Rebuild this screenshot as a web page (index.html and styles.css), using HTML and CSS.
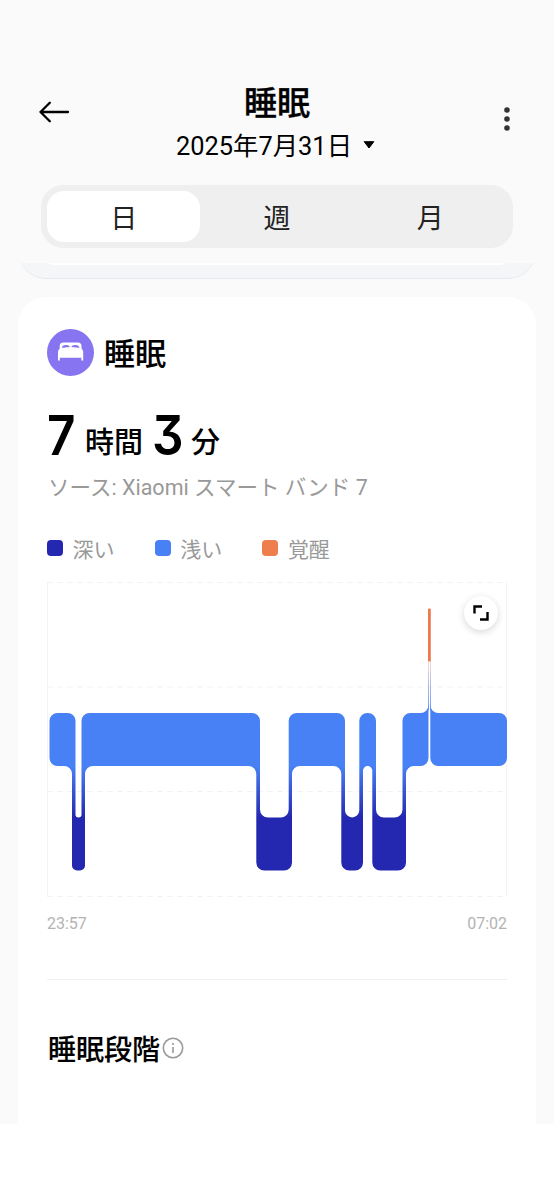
FILE: index.html
```html
<!DOCTYPE html>
<html lang="ja">
<head>
    <meta charset="UTF-8">
    <meta name="viewport" content="width=device-width, initial-scale=1.0">
    <title>睡眠</title>
    <link rel="stylesheet" href="styles.css">
</head>
<body>
    <div class="screen">
        <header class="header">
            <svg class="back" width="32" height="24" viewBox="0 0 32 24">
                <path d="M2.500 12H30M11.800 2.800L2.500 12L11.800 21.200" fill="none" stroke="#000" stroke-width="2.3" stroke-linecap="round" stroke-linejoin="round"/>
            </svg>
            <div class="heading">
                <h1>睡眠</h1>
                <div class="date">
                    <span>2025年7月31日</span>
                    <svg width="12" height="8" viewBox="0 0 12 8"><path d="M1.2.7H10.8L6 7Z" stroke="#000" stroke-width="1" stroke-linejoin="round"/></svg>
                </div>
            </div>
            <svg class="more" width="8" height="26" viewBox="0 0 8 26" fill="#333">
                <circle cx="4" cy="4" r="2.8"/>
                <circle cx="4" cy="13" r="2.8"/>
                <circle cx="4" cy="22" r="2.8"/>
            </svg>
        </header>

        <nav class="tabs">
            <div class="tab active">日</div>
            <div class="tab">週</div>
            <div class="tab">月</div>
        </nav>

        <!-- Bottom edge of the card scrolled under the header -->
        <div class="scrolled">
            <div class="prev-card"><div class="prev-inner"></div></div>
        </div>

        <main class="card">
            <div class="card-title">
                <svg width="47" height="47" viewBox="0 0 47 47">
                    <circle cx="23.5" cy="23.5" r="23.5" fill="#8674f0"/>
                    <path d="M12.700 20V17.300Q12.700 13.600 16.500 13.600H30.700Q34.500 13.600 34.500 17.300V20Z" fill="#fff"/>
                    <path d="M14.800 19.300Q15 16 18.800 16Q22.600 16 22.800 18.300ZM24.400 18.300Q24.600 16 28.400 16Q32.200 16 32.400 19.300Z" fill="#8674f0"/>
                    <path d="M11 31.500V23.500Q11 19.300 15.500 18.800Q23.600 17.800 31.700 18.800Q36.200 19.300 36.200 23.500V31.500H34.400V28.800H12.800V31.500Z" fill="#fff"/>
                </svg>
                <h2>睡眠</h2>
            </div>

            <div class="duration">
                <span class="num">7</span>
                <span class="unit hours">時間</span>
                <span class="num">3</span>
                <span class="unit">分</span>
            </div>
            <p class="source">ソース: Xiaomi スマート バンド 7</p>

            <div class="legend">
                <div class="item"><i class="dot deep"></i>深い</div>
                <div class="item"><i class="dot light"></i>浅い</div>
                <div class="item"><i class="dot awake"></i>覚醒</div>
            </div>

            <div class="chart">
                <svg width="461" height="315" viewBox="0 0 461 315">
                    <defs>
                        <linearGradient id="stage" gradientUnits="userSpaceOnUse" x1="0" y1="184" x2="0" y2="236">
                            <stop offset="0" stop-color="#4881f5"/>
                            <stop offset="1" stop-color="#2427b0"/>
                        </linearGradient>
                        <linearGradient id="wake" gradientUnits="userSpaceOnUse" x1="0" y1="79" x2="0" y2="128">
                            <stop offset="0" stop-color="#f5d3c6"/>
                            <stop offset="1" stop-color="#4881f5"/>
                        </linearGradient>
                    </defs>
                    <g stroke="#f3f3f3">
                        <path d="M.5 0V315M459.500 0V315"/>
                        <path d="M0 .5H460M0 105H460M0 209.500H460M0 314.500H460" stroke-dasharray="6 4"/>
                    </g>
                    <!-- light / deep stages -->
                    <path fill="url(#stage)" d="M2.500 139a8 8 0 0 1 8-8H20.500a8 8 0 0 1 8 8V232.500a3 3 0 0 0 6 0V139a8 8 0 0 1 8-8H205a8 8 0 0 1 8 8V227.500a8 8 0 0 0 8 8H233.700a8 8 0 0 0 8-8V139a8 8 0 0 1 8-8H290a8 8 0 0 1 8 8V228.300a7.150 7.150 0 0 0 14.300 0V139a8 8 0 0 1 8-8H321a8 8 0 0 1 8 8V227.500a8 8 0 0 0 8 8H347.500a8 8 0 0 0 8-8V139a8 8 0 0 1 8-8H373.500a8 8 0 0 0 8-8V176a8 8 0 0 1-8 8H367a8 8 0 0 0-8 8V280.500a8 8 0 0 1-8 8H333.300a8 8 0 0 1-8-8V188.700a4.650 4.650 0 0 0-9.300 0V280.500a8 8 0 0 1-8 8H302.300a8 8 0 0 1-8-8V192a8 8 0 0 0-8-8H253a8 8 0 0 0-8 8V280.500a8 8 0 0 1-8 8H217.300a8 8 0 0 1-8-8V192a8 8 0 0 0-8-8H46a8 8 0 0 0-8 8V283.500a5 5 0 0 1-5 5H30a5 5 0 0 1-5-5V192a8 8 0 0 0-8-8H10.500a8 8 0 0 1-8-8Z"/>
                    <path fill="#4881f5" d="M383.300 123a8 8 0 0 0 8 8H452a8 8 0 0 1 8 8V176a8 8 0 0 1-8 8H391.300a8 8 0 0 1-8-8Z"/>
                    <!-- awake -->
                    <path fill="url(#wake)" d="M381 79h.8V128h-.8ZM383.100 79h.8V128h-.8Z"/>
                    <rect x="381" y="26.500" width="2.800" height="53" rx="1" fill="#ea7b4d"/>
                </svg>
                <button class="expand">
                    <svg width="16" height="16" viewBox="0 0 16 16"><path d="M1.500 8.500V1.500H9M14.500 7V14.500H7" fill="none" stroke="#000" stroke-width="2.400"/></svg>
                </button>
            </div>
            <div class="times">
                <span>23:57</span>
                <span>07:02</span>
            </div>

            <div class="stages">
                <h3>睡眠段階</h3>
                <svg width="22" height="22" viewBox="0 0 22 22">
                    <circle cx="11" cy="11" r="9.700" fill="none" stroke="#999" stroke-width="1.600"/>
                    <path d="M11 10V16" stroke="#999" stroke-width="1.600"/>
                    <circle cx="11" cy="7" r="1.100" fill="#999"/>
                </svg>
            </div>
        </main>
    </div>
</body>
</html>
```

FILE: styles.css
```css
* {
    box-sizing: border-box;
}
body {
    margin: 0;
    height: 1200px;
    background: #fff;
    color: #000;
    font-family: Roboto, "Noto Sans CJK JP", sans-serif;
    overflow: hidden;
}
h1, h2, h3, p {
    margin: 0;
}
svg {
    display: block;
}
.screen {
    height: 1124px;
    padding-top: 83px;
    background: #fafafa;
    overflow: hidden;
}
.header {
    display: flex;
    align-items: flex-start;
    justify-content: space-between;
    height: 102px;
    padding: 0 43px 0 38px;
}
.back {
    margin-top: 17px;
}
.more {
    margin-top: 23px;
}
.heading {
    display: flex;
    flex-direction: column;
    align-items: center;
    padding-right: 19px;
}
h1 {
    font-size: 33px;
    line-height: 42px;
    font-weight: 500;
    -webkit-text-stroke: 0.3px #000;
}
.date {
    display: flex;
    align-items: center;
    gap: 11px;
    padding-right: 3px;
    font-size: 25.4px;
    line-height: 42px;
}
.date svg {
    margin-bottom: 3px;
}

/* Day / week / month switch */
.tabs {
    display: flex;
    width: 472px;
    height: 63px;
    margin-left: 41px;
    padding: 6px;
    border-radius: 22px;
    background: #efefef;
}
.tab {
    flex: 1;
    border-radius: 17px;
    font-size: 27px;
    line-height: 56px;
    text-align: center;
    color: #222;
}
.tab.active {
    background: #fff;
}

.scrolled {
    display: flex;
    align-items: flex-end;
    height: 16px;
    margin: 15px 18px 18px;
    overflow: hidden;
}
.prev-card {
    flex: none;
    width: 518px;
    height: 70px;
    padding: 0 23px;
    border-bottom: 1px solid #e3e7f0;
    border-radius: 28px;
    background: #f4f6f8;
}
.prev-inner {
    height: 56px;
    border-radius: 0 0 14px 14px;
    background: #fff;
}

.card {
    height: 860px;
    margin: 0 18px;
    padding: 32px 29px 0;
    border-radius: 28px;
    background: #fff;
}
.card-title {
    display: flex;
    align-items: center;
    gap: 10px;
    height: 47px;
}
h2 {
    padding-top: 4px;
    font-size: 31px;
    line-height: 45px;
    font-weight: 500;
    -webkit-text-stroke: 0.1px #000;
}
.duration {
    display: flex;
    align-items: baseline;
    height: 96px;
    line-height: 119px;
}
.num {
    width: 28px;
    font-family: Inter, sans-serif;
    font-size: 55px;
    font-weight: 600;
    font-feature-settings: "cv09";
    transform: scaleX(0.9);
    transform-origin: left;
}
.unit {
    margin-left: 10px;
    font-size: 29px;
    font-weight: 500;
    transform: translateY(-2px);
}
.hours {
    margin-right: 9px;
}
.hours ~ .unit {
    margin-left: 11px;
}
.source {
    padding-left: 1px;
    font-size: 21.5px;
    line-height: 32px;
    color: #999;
}
.legend {
    display: flex;
    margin-top: 28px;
    height: 32px;
}
.item {
    display: flex;
    align-items: center;
    width: 107.7px;
    font-size: 21px;
    color: #999;
}
.dot {
    width: 16px;
    height: 16px;
    margin-right: 9.5px;
    border-radius: 4px;
}
.deep {
    background: #2427b0;
}
.light {
    background: #4881f5;
}
.awake {
    background: #ee7e4c;
}

/* Sleep chart */
.chart {
    position: relative;
    height: 315px;
    margin-top: 18px;
}
.expand {
    position: absolute;
    top: 14px;
    right: 9px;
    display: flex;
    align-items: center;
    justify-content: center;
    width: 34px;
    height: 34px;
    padding: 0;
    border: none;
    border-radius: 50%;
    background: #fff;
    box-shadow: 0 2px 7px rgba(0, 0, 0, 0.16);
}
.times {
    display: flex;
    justify-content: space-between;
    height: 83px;
    padding-top: 16px;
    border-bottom: 1px solid #efefef;
    font-size: 16px;
    line-height: 22px;
    color: #b3b3b3;
}
.stages {
    display: flex;
    align-items: center;
    gap: 2px;
    height: 136px;
    padding-left: 1px;
}
h3 {
    padding-top: 5px;
    font-size: 28px;
    line-height: 40px;
    font-weight: 500;
    -webkit-text-stroke: 0.1px #000;
}
```
